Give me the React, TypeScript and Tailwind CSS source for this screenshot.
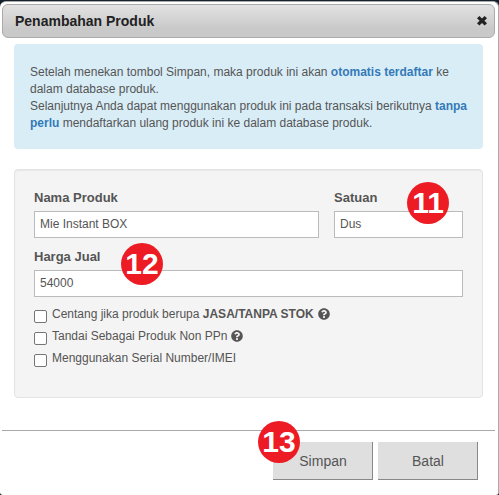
import { useState } from 'react'
import { FaQuestionCircle } from 'react-icons/fa'

const OPTIONS = [
  { id: 'jasa', label: 'Centang jika produk berupa ', strong: 'JASA/TANPA STOK', help: true },
  { id: 'non-ppn', label: 'Tandai Sebagai Produk Non PPn', help: true },
  { id: 'serial', label: 'Menggunakan Serial Number/IMEI', help: false },
]

export default function App() {
  return (
    <div className="bg-[#14202c] pt-px font-['Liberation_Sans',Arial,sans-serif] text-[12px] text-[#555]">
      <div
        role="dialog"
        aria-labelledby="dialog-title"
        className="rounded-t-md rounded-b-[3px] border-t border-r border-[#aaa] bg-white pt-[2px] pr-[3px] pb-[15px] pl-[2px]"
      >
        <TitleBar />
        <main className="px-3 pt-[6px]">
          <InfoBox />
          <ProductForm />
        </main>
        <footer className="mt-8 flex justify-end gap-[5px] border-t border-[#aaa] pt-[11px] pr-[17px]">
          <div className="relative">
            <DialogButton>Simpan</DialogButton>
            <StepBadge value={13} className="-top-[21px] -left-[15px]" />
          </div>
          <DialogButton>Batal</DialogButton>
        </footer>
      </div>
    </div>
  )
}

function TitleBar() {
  return (
    <header className="flex h-[34px] items-center justify-between rounded-md border border-[#aaa] bg-linear-to-b from-[#e2e2e2] to-[#c9c9c9] to-75% pr-[7px] pl-3">
      <h1 id="dialog-title" className="text-[14px] font-bold text-[#222]">
        Penambahan Produk
      </h1>
      <button type="button" aria-label="Tutup" className="text-[#222]">
        <svg viewBox="0 0 10 10" className="size-[10px]" aria-hidden>
          <path
            d="M2.4 0 5 2.5 7.6 0 10 2.3 7.4 4.8 10 7.3 7.6 9.6 5 7.1 2.4 9.6 0 7.3 2.6 4.8 0 2.3Z"
            fill="currentColor"
          />
        </svg>
      </button>
    </header>
  )
}

function InfoBox() {
  return (
    <div className="rounded bg-[#d9edf7] px-4 pt-5 pb-[17px] leading-[17px]">
      <p>
        Setelah menekan tombol Simpan, maka produk ini akan{' '}
        <b className="text-[#337ab7]">otomatis terdaftar</b> ke dalam database produk.
      </p>
      <p>
        Selanjutnya Anda dapat menggunakan produk ini pada transaksi berikutnya{' '}
        <b className="text-[#337ab7]">tanpa perlu</b> mendaftarkan ulang produk ini ke dalam database
        produk.
      </p>
    </div>
  )
}

function ProductForm() {
  return (
    <form className="mt-5 rounded border border-[#e3e3e3] bg-[#f4f4f4] px-[19px] pt-[19px] pb-7 shadow-[inset_0_1px_1px_rgba(0,0,0,0.05)]">
      <div className="flex gap-[15px]">
        <div className="grow-[285] basis-0">
          <Field id="nama" label="Nama Produk" initial="Mie Instant BOX" />
        </div>
        <div className="relative grow-[129] basis-0">
          <Field id="satuan" label="Satuan" initial="Dus" />
          <StepBadge value={11} className="-top-[7px] right-[14px]" />
        </div>
      </div>
      <div className="relative mt-[10px]">
        <Field id="harga" label="Harga Jual" initial="54000" />
        <StepBadge value={12} className="-top-[5px] left-[87px]" />
      </div>
      <div className="mt-[6px] flex flex-col">
        {OPTIONS.map((o) => (
          <div key={o.id} className="flex h-[22px] items-center">
            <input
              id={o.id}
              type="checkbox"
              className="mt-1 size-[13px] shrink-0 appearance-none rounded-[2px] border border-[#767676] bg-white checked:bg-[#337ab7]"
            />
            <label htmlFor={o.id} className="pl-[5px]">
              {o.label}
              {o.strong && <b>{o.strong}</b>}
            </label>
            {o.help && <FaQuestionCircle className="ml-1 size-3" aria-hidden />}
          </div>
        ))}
      </div>
    </form>
  )
}

function Field({ id, label, initial }: { id: string; label: string; initial: string }) {
  const [value, setValue] = useState(initial)
  return (
    <>
      <label htmlFor={id} className="block pb-[5px] text-[13px] leading-[17px] font-bold">
        {label}
      </label>
      <input
        id={id}
        value={value}
        onChange={(e) => setValue(e.target.value)}
        className="block h-[27px] w-full border border-[#bbb] bg-white px-[5px] pb-[2px]"
      />
    </>
  )
}

function DialogButton({ children }: { children: React.ReactNode }) {
  return (
    <button
      type="button"
      className="block h-[38px] w-[100px] bg-[#dfdfdf] text-[14px] shadow-[inset_-1px_-1px_0_#888]"
    >
      {children}
    </button>
  )
}

function StepBadge({ value, className }: { value: number; className: string }) {
  return (
    <span
      className={`absolute flex size-[42px] items-center justify-center rounded-full bg-[#ed1c24] text-[30px] leading-none font-bold text-white ${className}`}
    >
      {value}
    </span>
  )
}
